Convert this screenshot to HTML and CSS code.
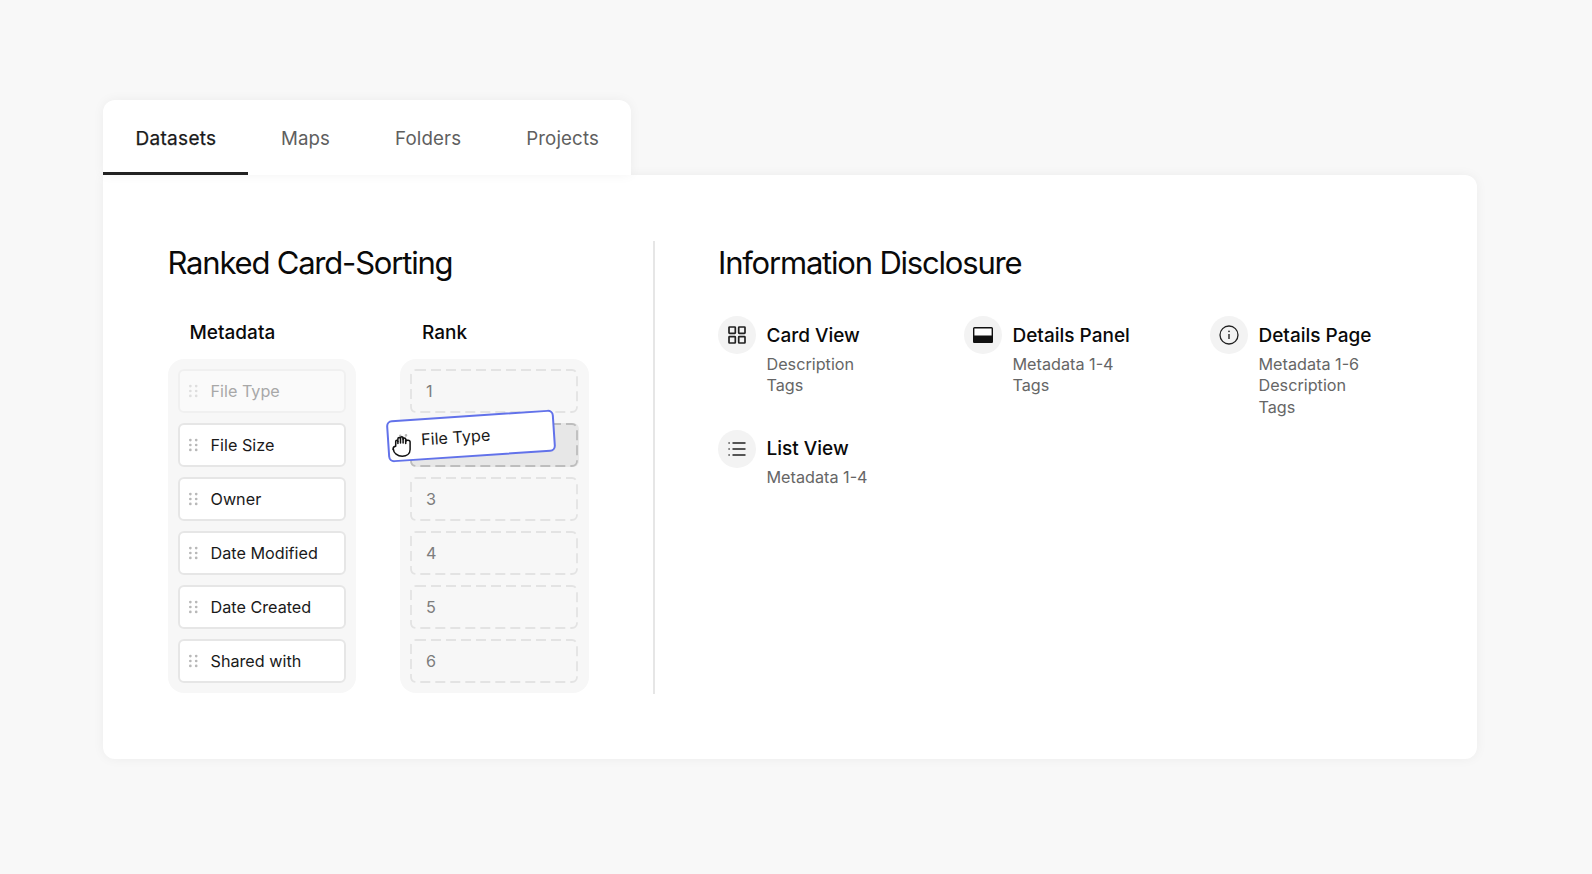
FILE: index.html
```html
<!DOCTYPE html>
<html lang="en">
<head>
<meta charset="utf-8">
<title>Ranked Card-Sorting</title>
<link rel="stylesheet" href="styles.css">
</head>
<body>
<main class="stage">
  <nav class="tabs">
    <span class="tab active">Datasets</span>
    <span class="tab">Maps</span>
    <span class="tab">Folders</span>
    <span class="tab">Projects</span>
  </nav>
  <section class="panel">
    <div class="sorting">
      <h2 class="title">Ranked Card-Sorting</h2>
      <div class="columns">
        <div class="column">
          <h3 class="col-head">Metadata</h3>
          <div class="tray">
            <div class="item faded"><svg class="grip" viewBox="0 0 10 14"><g><circle cx="1.5" cy="1.5" r="1.3"/><circle cx="8" cy="1.5" r="1.3"/><circle cx="1.5" cy="7" r="1.3"/><circle cx="8" cy="7" r="1.3"/><circle cx="1.5" cy="12.5" r="1.3"/><circle cx="8" cy="12.5" r="1.3"/></g></svg>File Type</div>
            <div class="item"><svg class="grip" viewBox="0 0 10 14"><g><circle cx="1.5" cy="1.5" r="1.3"/><circle cx="8" cy="1.5" r="1.3"/><circle cx="1.5" cy="7" r="1.3"/><circle cx="8" cy="7" r="1.3"/><circle cx="1.5" cy="12.5" r="1.3"/><circle cx="8" cy="12.5" r="1.3"/></g></svg>File Size</div>
            <div class="item"><svg class="grip" viewBox="0 0 10 14"><g><circle cx="1.5" cy="1.5" r="1.3"/><circle cx="8" cy="1.5" r="1.3"/><circle cx="1.5" cy="7" r="1.3"/><circle cx="8" cy="7" r="1.3"/><circle cx="1.5" cy="12.5" r="1.3"/><circle cx="8" cy="12.5" r="1.3"/></g></svg>Owner</div>
            <div class="item"><svg class="grip" viewBox="0 0 10 14"><g><circle cx="1.5" cy="1.5" r="1.3"/><circle cx="8" cy="1.5" r="1.3"/><circle cx="1.5" cy="7" r="1.3"/><circle cx="8" cy="7" r="1.3"/><circle cx="1.5" cy="12.5" r="1.3"/><circle cx="8" cy="12.5" r="1.3"/></g></svg>Date Modified</div>
            <div class="item"><svg class="grip" viewBox="0 0 10 14"><g><circle cx="1.5" cy="1.5" r="1.3"/><circle cx="8" cy="1.5" r="1.3"/><circle cx="1.5" cy="7" r="1.3"/><circle cx="8" cy="7" r="1.3"/><circle cx="1.5" cy="12.5" r="1.3"/><circle cx="8" cy="12.5" r="1.3"/></g></svg>Date Created</div>
            <div class="item"><svg class="grip" viewBox="0 0 10 14"><g><circle cx="1.5" cy="1.5" r="1.3"/><circle cx="8" cy="1.5" r="1.3"/><circle cx="1.5" cy="7" r="1.3"/><circle cx="8" cy="7" r="1.3"/><circle cx="1.5" cy="12.5" r="1.3"/><circle cx="8" cy="12.5" r="1.3"/></g></svg>Shared with</div>
          </div>
        </div>
        <div class="column">
          <h3 class="col-head">Rank</h3>
          <div class="tray">
            <div class="slot"><svg class="dash"><rect class="dash-line"/></svg>1</div>
            <div class="slot target"><svg class="dash"><rect class="dash-line"/></svg>2
              <div class="drag-card"><svg class="grip" viewBox="0 0 10 14"><g><circle cx="1.5" cy="1.5" r="1.3"/><circle cx="8" cy="1.5" r="1.3"/><circle cx="1.5" cy="7" r="1.3"/><circle cx="8" cy="7" r="1.3"/><circle cx="1.5" cy="12.5" r="1.3"/><circle cx="8" cy="12.5" r="1.3"/></g></svg>File Type</div>
              <svg class="hand" viewBox="0 0 20 22" fill="#fff" stroke="#111" stroke-width="1.5" stroke-linecap="round" stroke-linejoin="round"><path d="M1 14.500c0-2 1.100-3.300 2.700-3.300V6.500c0-1.600 2.200-1.600 2.200 0V3.800c0-1.600 2.600-1.600 2.600 0V3c0-1.600 2.600-1.600 2.600 0v1.200c0-1.600 2.600-1.600 2.600 0v2.300c.2-1.700 4.400-1.700 4.400.5v7.500c0 4.400-3.500 6.700-7.800 6.700-4.700 0-8.900-3.300-8.900-7z"/><path d="M5.900 6.500V8.500M8.500 3.800V8M11.100 3V8M13.700 4.200V8.500" fill="none"/></svg>
            </div>
            <div class="slot"><svg class="dash"><rect class="dash-line"/></svg>3</div>
            <div class="slot"><svg class="dash"><rect class="dash-line"/></svg>4</div>
            <div class="slot"><svg class="dash"><rect class="dash-line"/></svg>5</div>
            <div class="slot"><svg class="dash"><rect class="dash-line"/></svg>6</div>
          </div>
        </div>
      </div>
    </div>
    <div class="disclosure">
      <h2 class="title">Information Disclosure</h2>
      <div class="views">
        <div class="view">
          <span class="badge"><svg class="glyph" viewBox="0 0 18 18" fill="none" stroke="#222" stroke-width="1.7"><rect x="1" y="1" width="6.300" height="6.300" rx=".6"/><rect x="10.700" y="1" width="6.300" height="6.300" rx=".6"/><rect x="1" y="10.700" width="6.300" height="6.300" rx=".6"/><rect x="10.700" y="10.700" width="6.300" height="6.300" rx=".6"/></svg></span>
          <div><h4 class="view-name">Card View</h4><p class="view-meta">Description<br>Tags</p></div>
        </div>
        <div class="view">
          <span class="badge"><svg class="glyph-panel" viewBox="0 0 20 16"><rect x=".7" y=".7" width="18.600" height="14.600" rx=".8" fill="#fff" stroke="#111" stroke-width="1.400"/><path d="M.5 8.500h19v6.500a1 1 0 0 1-1 1h-17a1 1 0 0 1-1-1z" fill="#111"/></svg></span>
          <div><h4 class="view-name">Details Panel</h4><p class="view-meta">Metadata 1-4<br>Tags</p></div>
        </div>
        <div class="view">
          <span class="badge"><svg class="glyph-info" viewBox="0 0 20 20" fill="none" stroke="#222" stroke-width="1.300"><circle cx="10" cy="10" r="9"/><path d="M10 9v5" stroke-width="1.400"/><circle cx="10" cy="6.300" r=".85" fill="#222" stroke="none"/></svg></span>
          <div><h4 class="view-name">Details Page</h4><p class="view-meta">Metadata 1-6<br>Description<br>Tags</p></div>
        </div>
        <div class="view">
          <span class="badge"><svg class="glyph" viewBox="0 0 18 14" fill="none" stroke="#222" stroke-width="1.300"><path d="M4.500 1h13M4.500 7h13M4.500 13h13"/><path d="M.5 1h1.200M.5 7h1.200M.5 13h1.200"/></svg></span>
          <div><h4 class="view-name">List View</h4><p class="view-meta">Metadata 1-4</p></div>
        </div>
      </div>
    </div>
  </section>
</main>
</body>
</html>
```
FILE: styles.css
```css
* { box-sizing: border-box; }
html, body { margin: 0; height: 100%; }
body {
  background: #f8f8f8;
  font-family: Inter, "Liberation Sans", sans-serif;
  color: #111;
  overflow: hidden;
}
.stage {
  width: 1374px;
  margin-left: 103px;
  padding-top: 100px;
}
.tabs {
  position: relative;
  z-index: 1;
  display: inline-flex;
  height: 75px;
  background: #fff;
  border-radius: 12px 12px 0 0;
  box-shadow: 0 0 12px rgba(0, 0, 0, .05);
  vertical-align: top;
}
.tab {
  display: flex;
  align-items: center;
  padding: 4px 32.500px 0;
  font-size: 18.700px;
  letter-spacing: .12px;
  color: #5f5f5f;
  border-bottom: 3px solid transparent;
}
.tab.active {
  padding-right: 32px;
  font-size: 19px;
  color: #1a1a1a;
  letter-spacing: .3px;
  border-bottom-color: #222;
  -webkit-text-stroke: .25px #1a1a1a;
}
.panel {
  position: relative;
  display: flex;
  height: 583.500px;
  padding: 66px 65px 65px 64.500px;
  background: #fff;
  border-radius: 0 12px 12px 12px;
  box-shadow: 0 0 12px rgba(0, 0, 0, .05);
}
.sorting {
  width: 487.500px;
  padding-right: 64px;
  border-right: 2px solid #e6e6e6;
}
.disclosure {
  flex: 1;
  padding-left: 63.500px;
}
.title {
  margin: 0;
  font-size: 31px;
  line-height: 44px;
  font-weight: 400;
  letter-spacing: -1.200px;
  color: #0a0a0a;
}
.columns {
  display: flex;
  gap: 44px;
  margin-top: 36px;
}
.column { width: 188.500px; }
.col-head {
  margin: 0 0 14px;
  padding-left: 22px;
  font-size: 19px;
  line-height: 24px;
  font-weight: 500;
  color: #0a0a0a;
}
.tray {
  display: flex;
  flex-direction: column;
  gap: 10px;
  padding: 10px;
  background: #f7f7f7;
  border-radius: 16px;
}
.item, .slot {
  height: 44px;
  display: flex;
  align-items: center;
  font-size: 16.200px;
  border-radius: 6px;
}
.item {
  padding-left: 9px;
  background: #fff;
  border: 2px solid #e6e6e6;
  color: #1a1a1a;
}
.item.faded {
  background: #fafafa;
  border-color: #f0f0f0;
  color: #a8a8a8;
}
.grip {
  width: 9px;
  height: 14px;
  margin-right: 13px;
  fill: #b8b8b8;
  flex: none;
}
.grip circle { r: 1.500px; }
.faded .grip { fill: #dedede; }
.slot {
  position: relative;
  padding-left: 16px;
  color: #7d7d7d;
}
.dash {
  position: absolute;
  inset: 0;
  width: 100%;
  height: 100%;
}
.dash-line {
  x: 1px;
  y: 1px;
  width: calc(100% - 2.500px);
  height: calc(100% - 2px);
  rx: 5px;
  fill: none;
  stroke: #e3e3e3;
  stroke-width: 1.800px;
  stroke-dasharray: 10 5;
}
.slot.target { background: #e7e7e7; }
.target .dash-line { stroke: #bdbdbd; }
.drag-card {
  position: absolute;
  left: -23px;
  top: -8px;
  width: 168px;
  height: 42px;
  display: flex;
  align-items: center;
  padding-left: 10px;
  background: #fff;
  border: 2px solid #6272ea;
  border-radius: 6px;
  transform: rotate(-3.800deg);
  color: #1a1a1a;
}
.hand {
  position: absolute;
  left: -18px;
  top: 12px;
  width: 20px;
  height: 22px;
}
.views {
  display: grid;
  grid-template-columns: repeat(3, 246px);
  row-gap: 11.500px;
  margin-top: 31px;
}
.view {
  display: flex;
  gap: 10.500px;
  align-items: flex-start;
}
.badge {
  flex: none;
  width: 38px;
  height: 38px;
  border-radius: 50%;
  background: #f3f3f3;
  display: flex;
  align-items: center;
  justify-content: center;
}
.glyph { width: 18px; height: 18px; }
.glyph-panel { width: 20px; height: 16px; }
.glyph-info { width: 20px; height: 20px; }
.view-name {
  margin: 7.500px 0 6px;
  font-size: 19px;
  line-height: 24px;
  font-weight: 500;
  color: #0a0a0a;
}
.view-meta {
  margin: 0;
  font-size: 16.200px;
  line-height: 21.500px;
  color: #666;
}
```
